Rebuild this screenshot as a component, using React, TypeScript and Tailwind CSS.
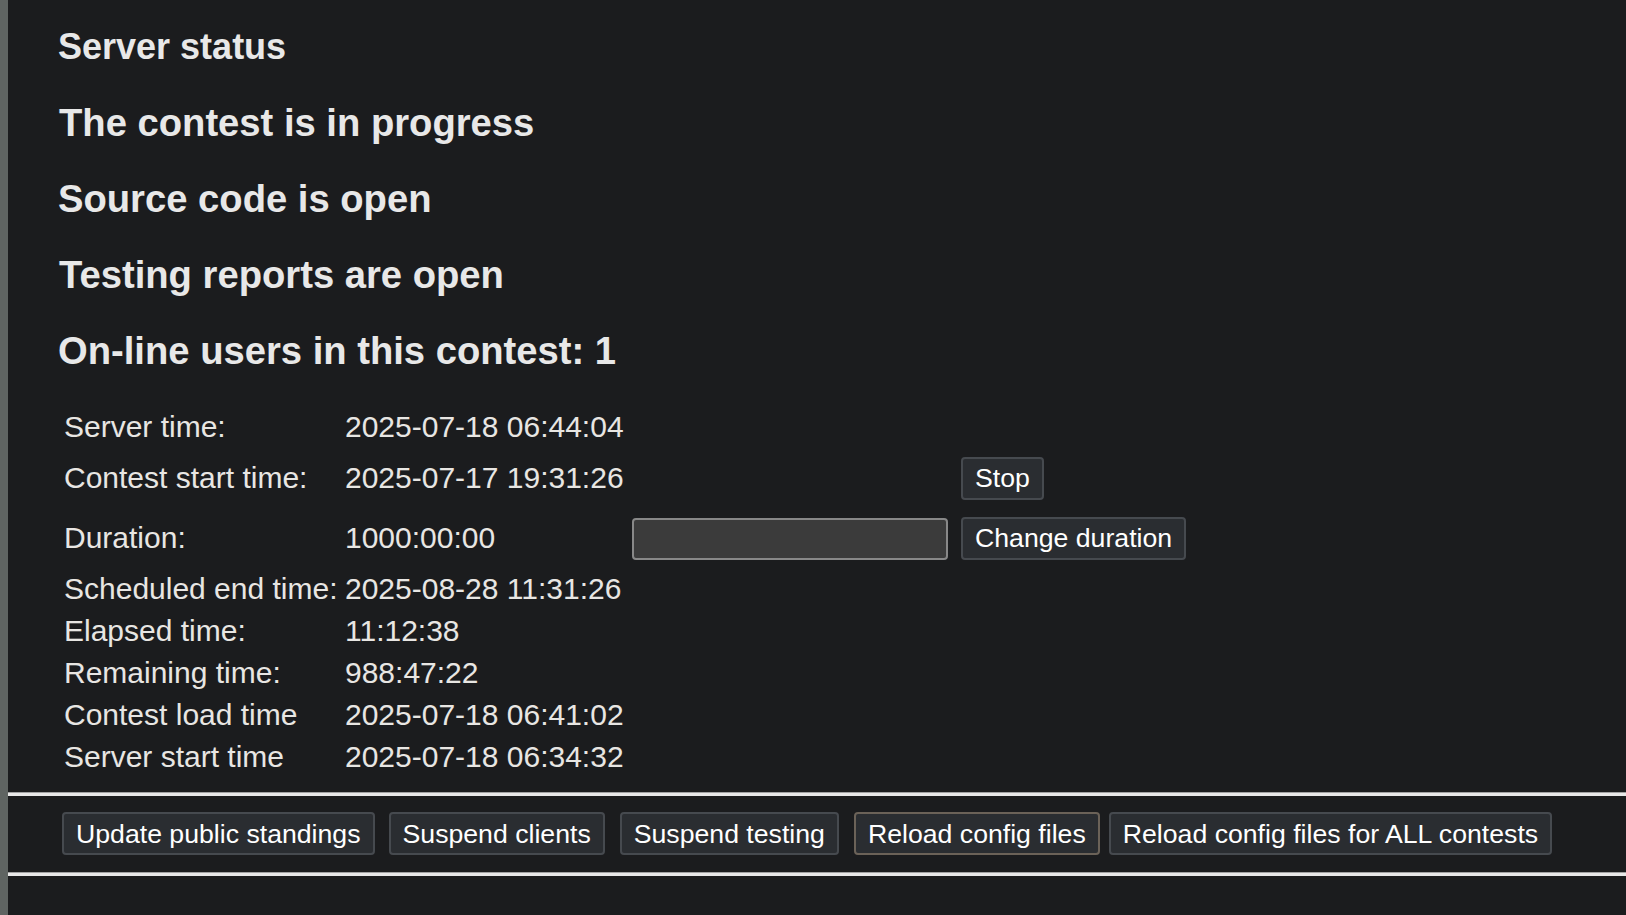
import React from "react";

const font = { fontFamily: '"Liberation Sans", Arial, sans-serif' };

function Btn({ children, brown }: { children: React.ReactNode; brown?: boolean }) {
  return (
    <button
      className={
        brown
          ? "h-[43px] px-[12px] border-2 border-[#6b6258] bg-[#2a2d31] rounded-[4px] text-[26.67px] leading-[30px] text-white whitespace-nowrap"
          : "h-[43px] px-[12px] border-2 border-[#464a4f] bg-[#2a2d31] rounded-[4px] text-[26.67px] leading-[30px] text-white whitespace-nowrap"
      }
    >
      {children}
    </button>
  );
}

function Hr() {
  return (
    <div className="w-full">
      <div className="h-[1px] bg-[#a2a2a2]" />
      <div className="h-[3px] bg-[#e8e8e8]" />
    </div>
  );
}

export default function App() {
  const rows: [string, string][] = [
    ["Scheduled end time:", "2025-08-28 11:31:26"],
    ["Elapsed time:", "11:12:38"],
    ["Remaining time:", "988:47:22"],
    ["Contest load time", "2025-07-18 06:41:02"],
    ["Server start time", "2025-07-18 06:34:32"],
  ];
  return (
    <div className="flex min-h-[915px] bg-[#1b1c1e] text-[#e8e6e3]" style={font}>
      <div className="w-[8px] shrink-0 bg-[#5f6462]" />
      <div className="flex-1 flex flex-col">
        <div className="pl-[50px] flex flex-col">
          <h2 className="mt-[25px] h-[44px] leading-[44px] text-[36px] font-bold text-[#e8e8e8]">Server status</h2>
          <h3 className="mt-[32px] h-[44px] leading-[44px] text-[38.2px] font-bold text-[#e8e8e8] pl-[1px]">The contest is in progress</h3>
          <h3 className="mt-[32px] h-[44px] leading-[44px] text-[38.2px] font-bold text-[#e8e8e8]">Source code is open</h3>
          <h3 className="mt-[32px] h-[44px] leading-[44px] text-[38.2px] font-bold text-[#e8e8e8] pl-[1px]">Testing reports are open</h3>
          <h3 className="mt-[32px] h-[44px] leading-[44px] text-[38.2px] font-bold text-[#e8e8e8]">On-line users in this contest: 1</h3>

          <div className="mt-[31px] p-[4px] grid grid-cols-[277px_282px_324px_max-content] gap-[4px] text-[30px] leading-[34px] whitespace-nowrap">
            <div className="px-[2px] py-[2px]">Server time:</div>
            <div className="px-[2px] py-[2px]">2025-07-18 06:44:04</div>
            <div />
            <div />

            <div className="px-[2px] h-[56px] flex items-center">Contest start time:</div>
            <div className="px-[2px] h-[56px] flex items-center">2025-07-17 19:31:26</div>
            <div />
            <div className="pl-[4px] h-[56px] flex items-center">
              <Btn>Stop</Btn>
            </div>

            <div className="px-[2px] h-[56px] flex items-center">Duration:</div>
            <div className="px-[2px] h-[56px] flex items-center">1000:00:00</div>
            <div className="pl-[3px] h-[56px] flex items-center pt-[2px]">
              <input
                type="text"
                className="w-[316px] h-[42px] bg-[#3b3b3b] border-2 border-[#888888] rounded-[4px] outline-none"
              />
            </div>
            <div className="pl-[4px] h-[56px] flex items-center">
              <Btn>Change duration</Btn>
            </div>

            {rows.map(([a, b]) => (
              <React.Fragment key={a}>
                <div className="px-[2px] py-[2px]">{a}</div>
                <div className="px-[2px] py-[2px]">{b}</div>
                <div />
                <div />
              </React.Fragment>
            ))}
          </div>
        </div>

        <div className="mt-[12px]">
          <Hr />
        </div>
        <div className="mt-[16px] pl-[54px] flex items-center">
          <div className="mr-[14px]"><Btn>Update public standings</Btn></div>
          <div className="mr-[15px]"><Btn>Suspend clients</Btn></div>
          <div className="mr-[15px]"><Btn>Suspend testing</Btn></div>
          <div className="mr-[9px]"><Btn brown>Reload config files</Btn></div>
          <div><Btn>Reload config files for ALL contests</Btn></div>
        </div>
        <div className="mt-[17px]">
          <Hr />
        </div>
      </div>
    </div>
  );
}
